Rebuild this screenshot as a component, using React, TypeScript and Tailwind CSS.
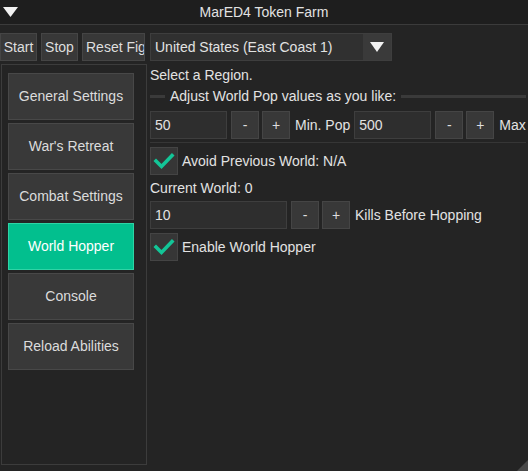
import React from 'react';

const font = { fontFamily: '"Liberation Sans", Arial, sans-serif' };

function Btn({ label, className = '' }: { label: string; className?: string }) {
  return (
    <div
      className={`h-[28px] flex items-center justify-center bg-[#383838] border border-[#454545] text-[#dedede] shrink-0 ${className}`}
    >
      {label}
    </div>
  );
}

function NumInput({ value, width }: { value: string; width: string }) {
  return (
    <div className={`h-[28px] ${width} flex items-center pl-[4px] bg-[#2e2e2e] border border-[#3e3e3e] shrink-0`}>
      {value}
    </div>
  );
}

function Stepper() {
  return (
    <>
      <Btn label="-" className="w-[28px] ml-[4px]" />
      <Btn label="+" className="w-[28px] ml-[3px]" />
    </>
  );
}

function Check({ label }: { label: string }) {
  return (
    <div className="flex items-center h-[28px]">
      <div className="w-[28px] h-[28px] bg-[#363636] border border-[#444] flex items-center justify-center shrink-0">
        <svg width="22" height="18" viewBox="0 0 22 18">
          <path d="M3 9 L8.5 14.5 L19 3.5" fill="none" stroke="#13c597" strokeWidth="3.6" strokeLinecap="square" />
        </svg>
      </div>
      <span className="ml-[4px]">{label}</span>
    </div>
  );
}

function SideButton({ label, active }: { label: string; active?: boolean }) {
  return (
    <div
      className={`w-[126px] h-[47px] flex items-center justify-center border ${
        active ? 'bg-[#02bf8e] border-[#2fd4a6] text-white' : 'bg-[#393939] border-[#484848] text-[#dcdcdc]'
      }`}
    >
      {label}
    </div>
  );
}

export default function App() {
  const tabs = ['General Settings', "War's Retreat", 'Combat Settings', 'World Hopper', 'Console', 'Reload Abilities'];
  return (
    <div style={font} className="w-[528px] h-[471px] bg-[#242424] text-[14px] text-[#e2e2e2] flex flex-col overflow-hidden relative">
      <div className="h-[25px] bg-[#1e1e1e] border-b border-[#3b3b3b] flex items-center relative shrink-0">
        <svg className="ml-[3px]" width="15" height="12" viewBox="0 0 15 12">
          <polygon points="0,1 15,1 7.5,11" fill="#f2f2f2" />
        </svg>
        <div className="absolute inset-0 flex items-center justify-center">MarED4 Token Farm</div>
      </div>

      <div className="flex items-center mt-[8px] shrink-0">
        <Btn label="Start" className="w-[37px]" />
        <Btn label="Stop" className="w-[37px] ml-[4px]" />
        <div className="w-[63px] ml-[4px] h-[28px] bg-[#383838] border border-[#454545] text-[#dedede] flex items-center pl-[3px] overflow-hidden whitespace-nowrap shrink-0">
          <span className="block w-[58px] overflow-hidden">Reset Fighting</span>
        </div>
        <div className="ml-[5px] w-[242px] h-[28px] flex border border-[#3e3e3e] shrink-0">
          <div className="flex-1 bg-[#303030] flex items-center pl-[4px]">United States (East Coast 1)</div>
          <div className="w-[28px] bg-[#3a3a3a] flex items-center justify-center">
            <svg width="14" height="12" viewBox="0 0 14 12">
              <polygon points="0,1 14,1 7,11" fill="#f2f2f2" />
            </svg>
          </div>
        </div>
      </div>

      <div className="flex flex-1 mt-[3px] min-h-0">
        <div className="w-[146px] ml-[1px] mb-[6px] border border-[#3c3c3c] flex flex-col gap-[3px] pt-[8px] pl-[6px] shrink-0">
          {tabs.map((t) => (
            <SideButton key={t} label={t} active={t === 'World Hopper'} />
          ))}
        </div>

        <div className="flex-1 flex flex-col pl-[3px] pr-[5px]">
          <div className="h-[20px] mt-[1px] flex items-center">Select a Region.</div>
          <div className="flex items-center h-[22px]">
            <div className="w-[15px] h-[3px] bg-[#3a3a3a]" />
            <span className="mx-[5px]">Adjust World Pop values as you like:</span>
            <div className="flex-1 h-[3px] bg-[#3a3a3a]" />
          </div>
          <div className="flex items-center mt-[4px]">
            <NumInput value="50" width="w-[77px]" />
            <Stepper />
            <span className="ml-[5px] whitespace-nowrap">Min. Pop</span>
            <div className="ml-[4px]">
              <NumInput value="500" width="w-[77px]" />
            </div>
            <Stepper />
            <span className="ml-[5px]">Max</span>
          </div>
          <div className="h-[1px] bg-[#363636] mt-[3px] mb-[4px]" />
          <Check label="Avoid Previous World: N/A" />
          <div className="h-[26px] flex items-center">Current World: 0</div>
          <div className="flex items-center">
            <NumInput value="10" width="w-[137px]" />
            <Stepper />
            <span className="ml-[5px]">Kills Before Hopping</span>
          </div>
          <div className="mt-[4px]">
            <Check label="Enable World Hopper" />
          </div>
        </div>
      </div>

      <svg className="absolute right-0 bottom-0" width="11" height="11" viewBox="0 0 11 11">
        <polygon points="11,0 11,11 0,11" fill="#4a4a4a" />
      </svg>
    </div>
  );
}
